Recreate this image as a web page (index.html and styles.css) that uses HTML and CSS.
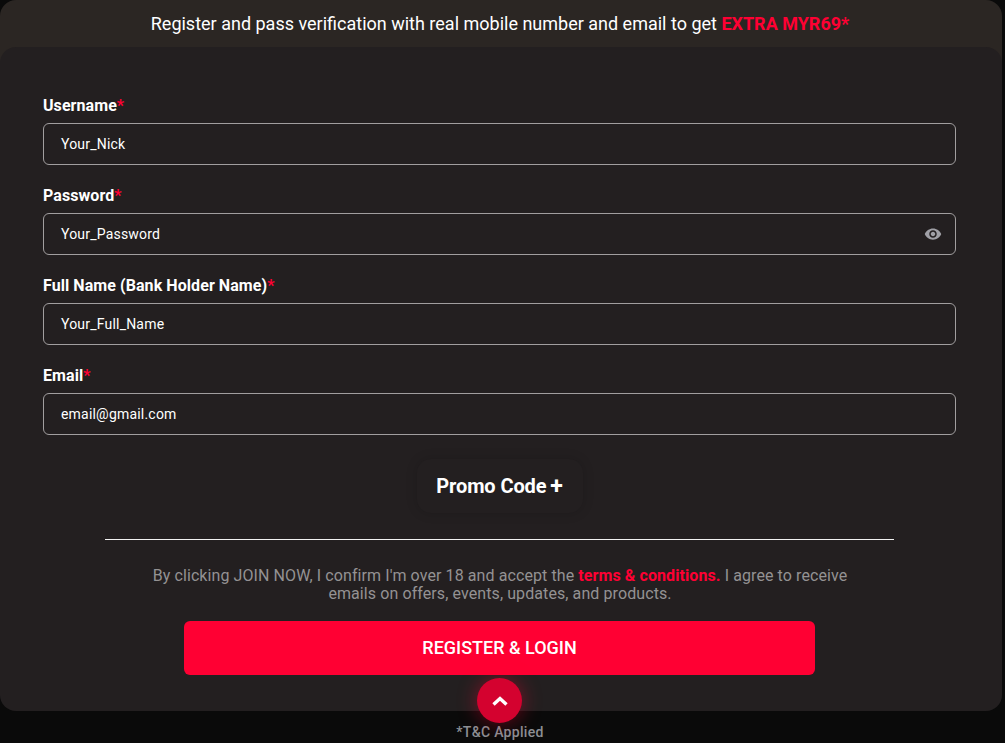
FILE: index.html
```html
<!DOCTYPE html>
<html lang="en">
<head>
<meta charset="utf-8">
<title>Register</title>
<link rel="stylesheet" href="styles.css">
</head>
<body>
<main class="panel">
  <div class="banner">Register and pass verification with real mobile number and email to get <strong class="accent">EXTRA MYR69*</strong></div>
  <form class="card">
    <div class="field">
      <label class="label">Username<span class="accent">*</span></label>
      <div class="input"><span>Your_Nick</span></div>
    </div>
    <div class="field">
      <label class="label">Password<span class="accent">*</span></label>
      <div class="input"><span>Your_Password</span>
        <svg class="eye" viewBox="0 0 24 24" width="18" height="18" aria-hidden="true"><path fill="#a0a0a6" d="M12 4.5C7 4.5 2.73 7.61 1 12c1.73 4.39 6 7.5 11 7.5s9.27-3.11 11-7.5c-1.73-4.39-6-7.5-11-7.5zM12 17c-2.76 0-5-2.24-5-5s2.24-5 5-5 5 2.24 5 5-2.24 5-5 5zm0-8c-1.66 0-3 1.34-3 3s1.34 3 3 3 3-1.34 3-3-1.34-3-3-3z"/></svg>
      </div>
    </div>
    <div class="field">
      <label class="label">Full Name (Bank Holder Name)<span class="accent">*</span></label>
      <div class="input"><span>Your_Full_Name</span></div>
    </div>
    <div class="field">
      <label class="label">Email<span class="accent">*</span></label>
      <div class="input"><span>email@gmail.com</span></div>
    </div>
    <div class="promo-row"><div class="promo">Promo Code <span class="plus">+</span></div></div>
    <hr class="divider">
    <p class="terms">By clicking JOIN NOW, I confirm I'm over 18 and accept the <strong class="accent">terms &amp; conditions.</strong> I agree to receive emails on offers, events, updates, and products.</p>
    <div class="submit">REGISTER &amp; LOGIN</div>
  </form>
  <div class="footer">
    <div class="top-btn">
      <svg viewBox="0 0 24 24" width="24" height="24" aria-hidden="true"><path d="M5.5 15.5 12 9.5l6.5 6" fill="none" stroke="#fff" stroke-width="3.4"/></svg>
    </div>
    <div class="applied">*T&amp;C Applied</div>
  </div>
</main>
</body>
</html>
```
FILE: styles.css
```css
* { box-sizing: border-box; }
html, body { margin: 0; height: 743px; overflow: hidden; }
body { background: #0a0a0a; font-family: Roboto, "Liberation Sans", sans-serif; color: #fff; }
.panel { width: 1002px; position: relative; }
.accent { color: #ff0033; }
.banner {
  height: 63px; margin-bottom: -16px; padding: 13px 2px 0 0;
  background: #2b2623; border-radius: 16px 16px 0 0;
  font-size: 18px; line-height: 22px; text-align: center;
}
.banner strong { font-weight: 700; }
.card {
  height: 664px; padding: 48px 46px 0 43px;
  background: #231f20; border-radius: 16px;
}
.field { height: 90px; }
.label { display: block; height: 28px; font-size: 16px; font-weight: 700; line-height: 22px; letter-spacing: .07px; }
.input {
  display: flex; align-items: center; justify-content: space-between;
  height: 42px; padding: 0 13px 0 17px;
  border: 1px solid #a19e9f; border-radius: 6px;
  font-size: 14px; letter-spacing: .2px;
}
.eye { display: block; }
.promo-row { display: flex; justify-content: center; margin-top: 4px; }
.promo {
  width: 166px; height: 54px; line-height: 54px; text-align: center;
  font-size: 20px; font-weight: 700; letter-spacing: -0.1px;
  border-radius: 14px; background: #231f20;
  box-shadow: 0 0 12px rgba(10, 10, 10, .16);
}
.plus { font-size: 23px; line-height: 20px; margin-left: -1px; vertical-align: -1px; }
.divider { width: 789px; height: 1px; margin: 26px 0 0 62px; border: 0; background: #f2f2f2; }
.terms {
  width: 720px; margin: 27px 0 0 97px;
  font-size: 16px; line-height: 18px; text-align: center; color: #949293; letter-spacing: .09px;
}
.terms strong { font-weight: 700; }
.submit {
  width: 631px; height: 54px; margin: 18px 0 0 141px;
  background: #ff0033; border-radius: 6px;
  font-size: 18px; font-weight: 500; line-height: 54px; text-align: center;
}
.footer { height: 32px; position: relative; text-align: center; }
.top-btn {
  position: absolute; left: 477px; top: -33px;
  width: 45px; height: 45px; border-radius: 50%;
  display: flex; align-items: center; justify-content: center;
  background: #d4022f;
  box-shadow: 0 0 20px rgba(255, 0, 51, .42);
}
.applied {
  padding-top: 12px; margin-left: -2px;
  font-size: 14px; font-weight: 500; line-height: 18px; color: #8c8f94; letter-spacing: .3px;
}
```
